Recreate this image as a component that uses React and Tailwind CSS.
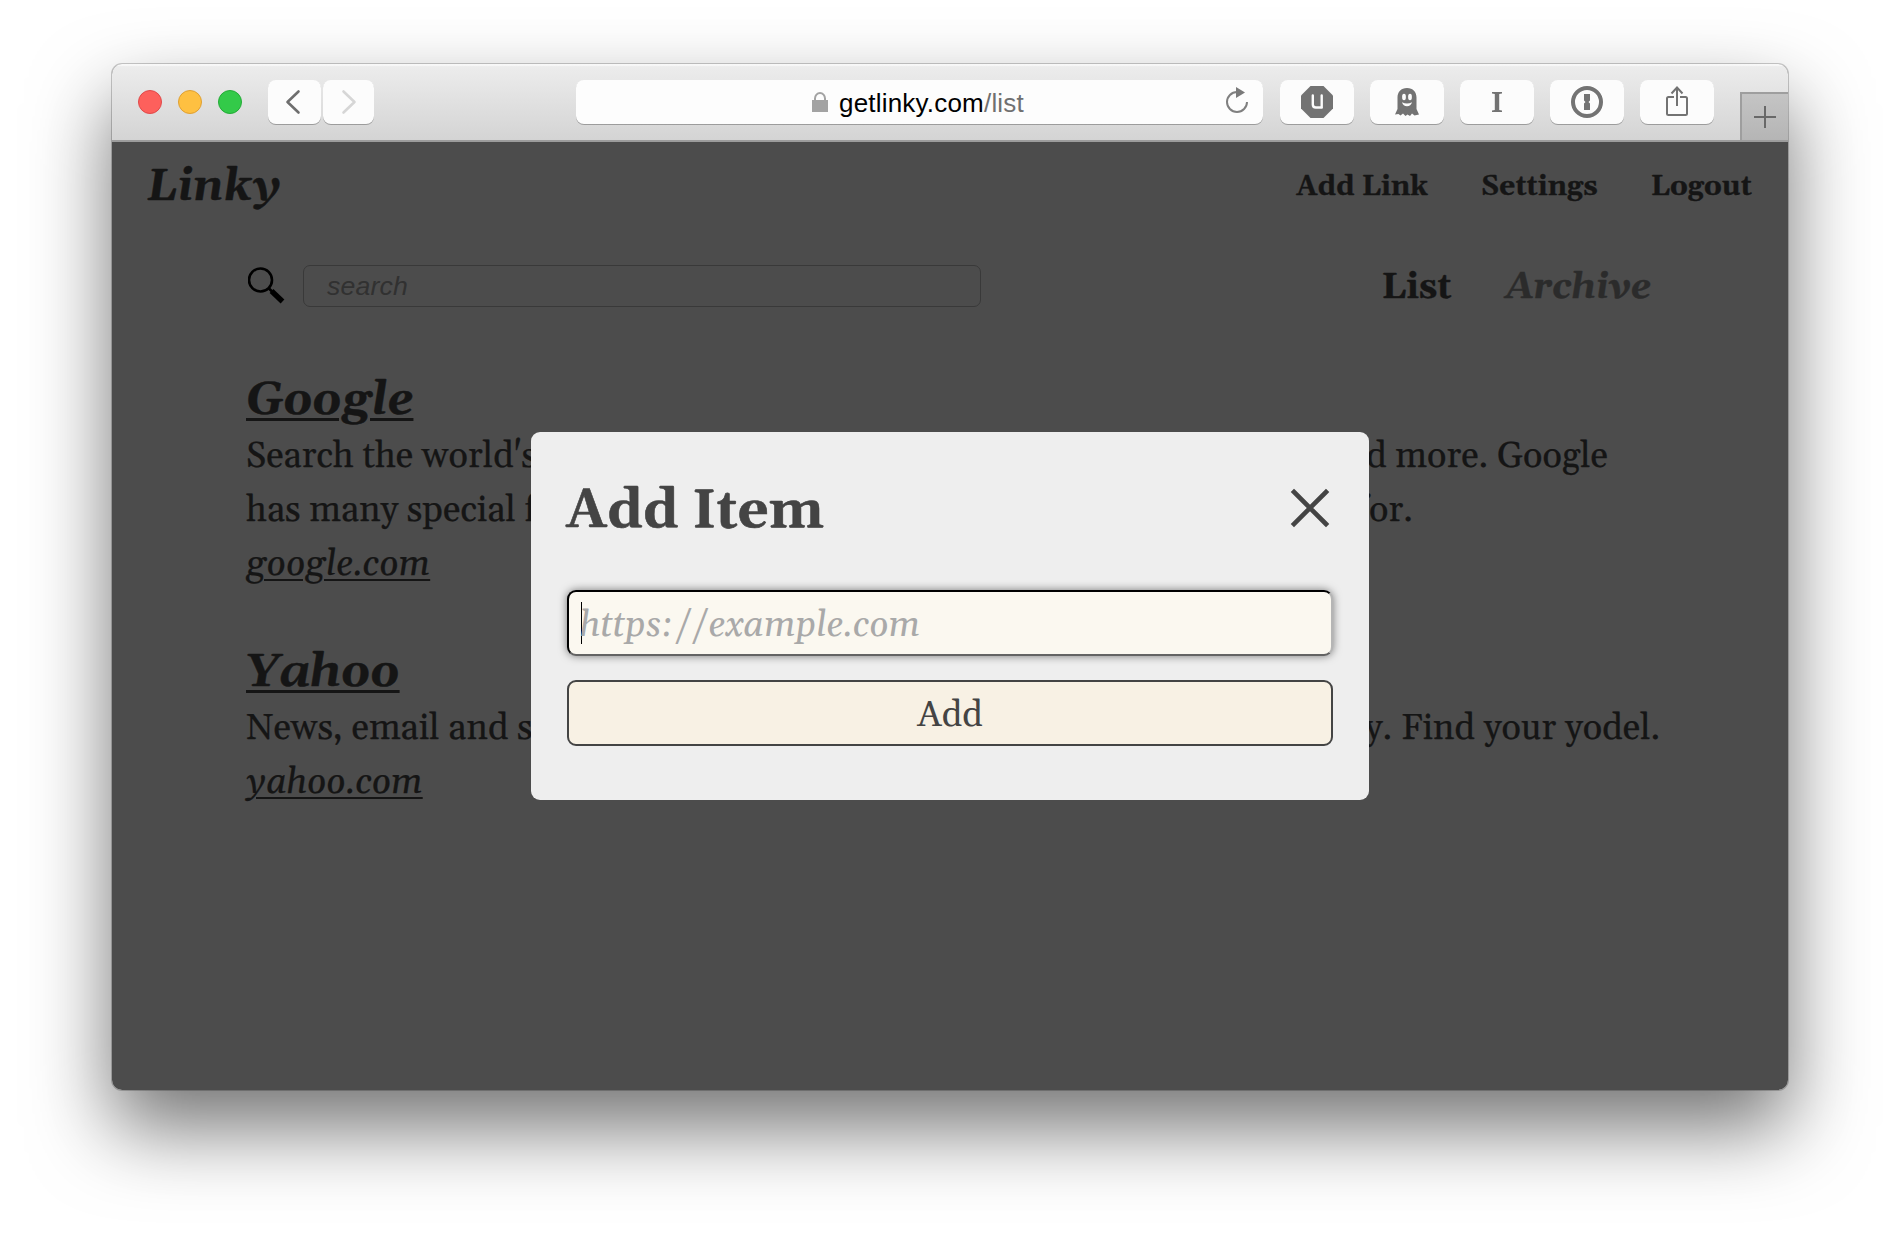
import React from "react";

const serif = "font-[Gelasio,'DejaVu_Serif_Condensed','Liberation_Serif',serif]";

const links = [
  {
    title: "Google",
    text: "Search the world's information, including webpages, images, videos and more. Google has many special features to help you find exactly what you're looking for.",
    host: "google.com",
  },
  {
    title: "Yahoo",
    text: "News, email and search are just the beginning. Discover more every day. Find your yodel.",
    host: "yahoo.com",
  },
];

function ToolButton({ className = "w-[74px]", children }) {
  return (
    <button
      className={`flex h-11 shrink-0 items-center justify-center rounded-[8px] bg-[#fcfcfc] text-[#737373] shadow-[0_1px_0.5px_rgba(0,0,0,0.28)] ${className}`}
    >
      {children}
    </button>
  );
}

function Toolbar() {
  return (
    <div className="flex h-[78px] items-start border-b-2 border-[#9c9c9c] bg-linear-to-b from-[#ededed] to-[#d4d4d4] pt-4 shadow-[inset_0_2px_1px_rgba(255,255,255,0.6)]">
      <div className="ml-[26px] flex h-11 items-center gap-4">
        <span className="size-6 rounded-full border border-[#e0494a] bg-[#fd605c]" />
        <span className="size-6 rounded-full border border-[#dfa033] bg-[#fec041]" />
        <span className="size-6 rounded-full border border-[#24ab37] bg-[#33ca49]" />
      </div>
      <div className="ml-[26px] flex gap-[2px]">
        <ToolButton className="w-[53px]">
          <svg width="53" height="44" fill="none" stroke="#6e6e6e" strokeWidth="2.6" strokeLinecap="round" strokeLinejoin="round">
            <path d="M30.5 11.5 19.5 22l11 10.5" />
          </svg>
        </ToolButton>
        <ToolButton className="w-[51px]">
          <svg width="51" height="44" fill="none" stroke="#d6d6d6" strokeWidth="2.6" strokeLinecap="round" strokeLinejoin="round">
            <path d="M20.5 11.5 31.5 22l-11 10.5" />
          </svg>
        </ToolButton>
      </div>
      <div className="ml-[202px] flex h-11 w-[687px] items-center rounded-[8px] bg-[#fdfdfd] pl-[236px] pr-[14px] shadow-[0_1px_0.5px_rgba(0,0,0,0.28)]">
        <svg width="16" height="20" viewBox="0 0 16 20" className="shrink-0">
          <path d="M3 9V6.5a5 5.5 0 0 1 10 0V9" fill="none" stroke="#a3a3a3" strokeWidth="2" />
          <rect y="8" width="16" height="12" fill="#a3a3a3" />
        </svg>
        <span className="ml-[11px] mt-[2px] font-['Liberation_Sans',Arial,sans-serif] text-[26px] leading-none tracking-[0.2px] text-black">
          getlinky.com<span className="text-[#707070]">/list</span>
        </span>
        <svg width="24" height="28" viewBox="0 0 24 28" className="mb-1 ml-auto">
          <path d="M12 6A10 10 0 1 0 22 16" fill="none" stroke="#808080" strokeWidth="2" />
          <path d="M11 1 20 6.5l-9 5.5z" fill="#7a7a7a" />
        </svg>
      </div>
      <div className="ml-[17px] flex gap-4">
        <ToolButton>
          <svg width="32" height="32" viewBox="0 0 32 32">
            <path d="M9.5 0h13L32 9.5v13L22.5 32h-13L0 22.5v-13z" fill="#737373" />
            <path d="M11.8 9.500v9q0 3 3 3h6M20.700 9.500v12" fill="none" stroke="#fcfcfc" strokeWidth="2.4" strokeLinecap="round" />
          </svg>
        </ToolButton>
        <ToolButton>
          <svg width="24" height="28" viewBox="0 0 24 28">
            <path d="M12 0C6 0 2.5 4 2.5 9.5V21L0 26.5l3.5-.5 2 1.500 2.500-2 2.500 2.500 2-1.500 2.500 1.500 2-2.500 2.500 2L24 26.500l-2.500-5.500V9.5C21.5 4 18 0 12 0z" fill="#737373" />
            <ellipse cx="9" cy="9" rx="1.9" ry="3.3" fill="#fcfcfc" />
            <ellipse cx="15" cy="9" rx="1.9" ry="3.3" fill="#fcfcfc" />
            <path d="M7 14.2q5 2.5 10 0-1.200 4-5 4t-5-4z" fill="#fcfcfc" />
          </svg>
        </ToolButton>
        <ToolButton>
          <svg width="12" height="20" viewBox="0 0 12 20">
            <path d="M1 0h10v1.500l-2.800.6v15.800l2.800.6V20H1v-1.500l2.800-.6V2.100L1 1.500z" fill="#737373" />
          </svg>
        </ToolButton>
        <ToolButton>
          <svg width="32" height="32" viewBox="0 0 32 32">
            <circle cx="16" cy="16" r="14" fill="none" stroke="#737373" strokeWidth="4" />
            <path d="M13 8h6v6.500l-1.500 1.500L19 17.500V24h-6v-6.500l1.500-1.500L13 14.500z" fill="#737373" />
          </svg>
        </ToolButton>
        <ToolButton>
          <svg width="22" height="30" viewBox="0 0 22 30" className="mb-[2px]" fill="none" stroke="#737373" strokeWidth="2">
            <path d="M8 11H2.500Q1 11 1 12.500v15Q1 29 2.500 29h17q1.500 0 1.500-1.500v-15q0-1.500-1.500-1.500H14" />
            <path d="M11 20V2M5.500 7.500 11 1.500l5.500 6" />
          </svg>
        </ToolButton>
      </div>
      <div className="ml-auto flex h-12 w-12 items-center justify-center self-end border-l-2 border-t-2 border-[#9e9e9e] bg-linear-to-b from-[#c4c4c4] to-[#b5b5b5]">
        <svg width="22" height="22" stroke="#686868" strokeWidth="2">
          <path d="M11 0v22M0 11h22" />
        </svg>
      </div>
    </div>
  );
}

function AddItemModal() {
  return (
    <div className="absolute left-[419px] top-[290px] h-[368px] w-[838px] rounded-[9px] bg-[#eee] px-9 pt-9 text-[#444]">
      <div className="flex h-20 items-center justify-between">
        <h2 className="-ml-px pt-1.5 text-[54px] font-bold leading-[80px] [-webkit-text-stroke:0.6px_#444]">Add Item</h2>
        <svg width="40" height="40" className="mr-[3px]" fill="none" stroke="#444" strokeWidth="4.6" strokeLinecap="square">
          <path d="m4 4 32 32M36 4 4 36" />
        </svg>
      </div>
      <div className="mt-[42px] flex h-[66px] items-center rounded-[9px] border-2 border-b-[#636363] border-l-black border-r-[#b5b5b5] border-t-black bg-[#fbf8f0] pl-3 shadow-[0_0_9px_rgba(0,0,0,0.5)]">
        <span className="h-[42px] w-px bg-black" />
        <span className="-ml-[2px] pt-1.5 text-[36px] italic leading-[54px] tracking-[-0.08px] text-[#a9a9a9]">https://example.com</span>
      </div>
      <button className="mt-6 block h-[66px] w-full rounded-[9px] border-2 border-[#444] bg-[#f8f1e4] pt-[3px] text-center text-[36px] leading-[62px]">
        Add
      </button>
    </div>
  );
}

export default function App() {
  return (
    <div className={`h-[1250px] w-[1900px] overflow-hidden bg-white px-28 pt-16 ${serif}`}>
      <div className="h-[1026px] w-[1676px] rounded-[10px] shadow-[0_0_0_1px_rgba(0,0,0,0.2),0_38px_80px_rgba(0,0,0,0.55)]">
        <div className="h-full overflow-hidden rounded-[10px] bg-[#4c4c4c]">
          <Toolbar />
          <div className="relative h-[948px] text-[#151515]">
            <header className="flex h-[86px] items-center justify-between px-9 pt-1">
              <h1 className="-ml-px text-[44px] font-bold italic leading-[60px] [-webkit-text-stroke:0.5px_#151515]">Linky</h1>
              <nav className="flex gap-[53px] text-[28px] font-bold leading-[42px] tracking-[0.05px] [-webkit-text-stroke:0.4px_#151515]">
                <a>Add Link</a>
                <a>Settings</a>
                <a>Logout</a>
              </nav>
            </header>
            <main className="px-[134px]">
              <div className="flex h-[116px] items-center">
                <svg width="37" height="37" viewBox="0 0 37 37" className="mb-[2px] ml-[2px]">
                  <circle cx="12.5" cy="13" r="11.5" fill="none" stroke="#000" strokeWidth="2.6" />
                  <path d="m20.5 21 3.5 3.5" stroke="#000" strokeWidth="2.6" />
                  <path d="m23.5 24 11 10.5" stroke="#000" strokeWidth="5.4" />
                </svg>
                <div className="ml-[18px] h-[42px] w-[678px] rounded-[7px] border border-[#393939] pl-[23px] font-['Liberation_Sans',Arial,sans-serif] text-[26.67px] italic leading-[40px] tracking-[0.15px] text-[#313131]">
                  search
                </div>
                <div className="ml-auto mr-[3px] flex gap-[54px] pt-1 text-[36px] font-bold leading-[54px]">
                  <a className="[-webkit-text-stroke:0.4px_#151515]">List</a>
                  <a className="italic text-[#2b2b2b] [-webkit-text-stroke:0.4px_#2b2b2b]">Archive</a>
                </div>
              </div>
              <div className="mt-[29px] flex w-[1417px] flex-col gap-[53px]">
                {links.map((link) => (
                  <article key={link.host} className="text-[36px] leading-[54px] [-webkit-text-stroke:0.25px_#151515]">
                    <h2 className="mb-px text-[46px] font-bold italic leading-[56px] [-webkit-text-stroke:0.5px_#151515]">
                      <a className="underline decoration-[3px] underline-offset-[4px]">{link.title}</a>
                    </h2>
                    <p>{link.text}</p>
                    <a className="italic underline decoration-2 underline-offset-[4px]">{link.host}</a>
                  </article>
                ))}
              </div>
            </main>
            <AddItemModal />
          </div>
        </div>
      </div>
    </div>
  );
}
